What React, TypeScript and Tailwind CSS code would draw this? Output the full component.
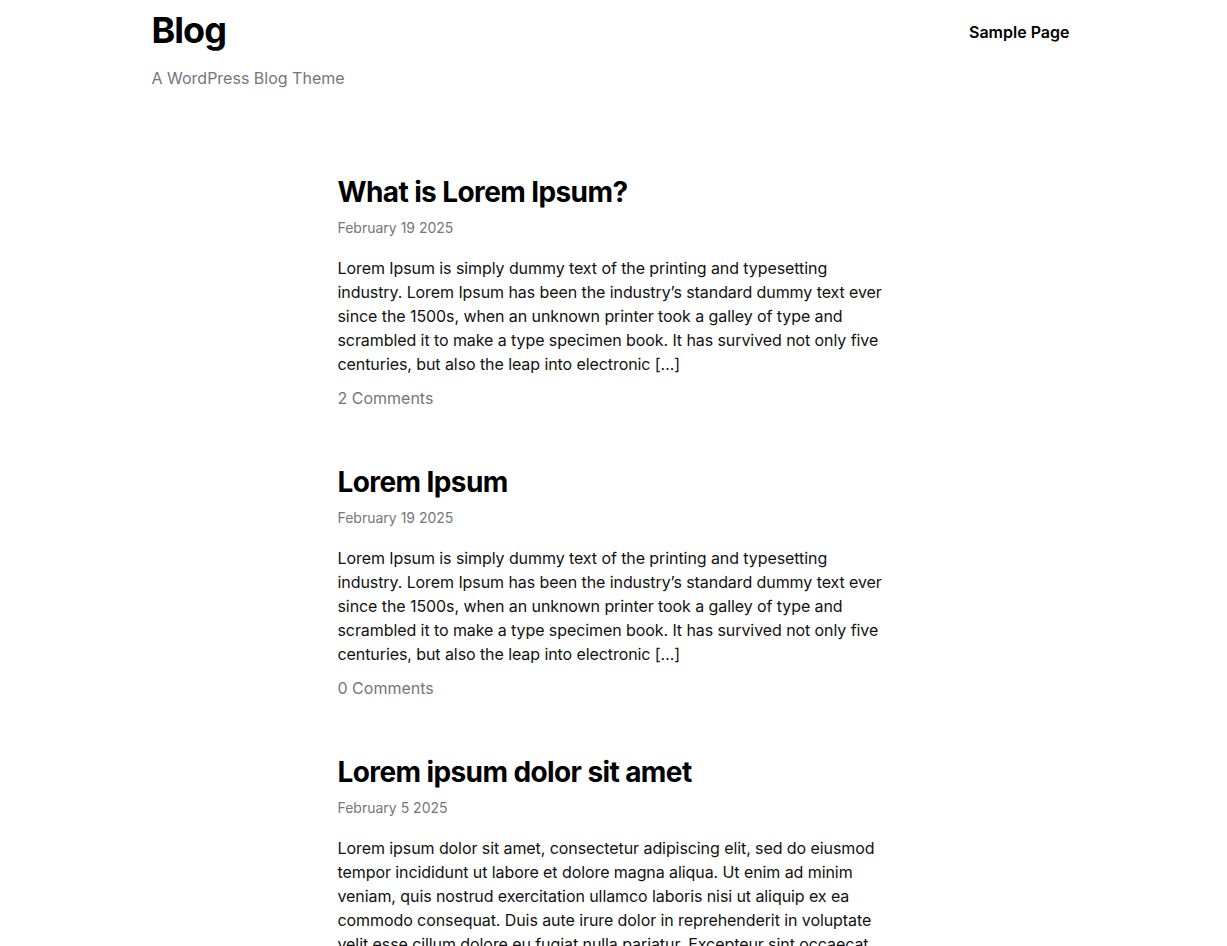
const posts = [
  {
    title: 'What is Lorem Ipsum?',
    date: 'February 19 2025',
    excerpt:
      'Lorem Ipsum is simply dummy text of the printing and typesetting industry. Lorem Ipsum has been the industry’s standard dummy text ever since the 1500s, when an unknown printer took a galley of type and scrambled it to make a type specimen book. It has survived not only five centuries, but also the leap into electronic […]',
    comments: '2 Comments',
  },
  {
    title: 'Lorem Ipsum',
    date: 'February 19 2025',
    excerpt:
      'Lorem Ipsum is simply dummy text of the printing and typesetting industry. Lorem Ipsum has been the industry’s standard dummy text ever since the 1500s, when an unknown printer took a galley of type and scrambled it to make a type specimen book. It has survived not only five centuries, but also the leap into electronic […]',
    comments: '0 Comments',
  },
  {
    title: 'Lorem ipsum dolor sit amet',
    date: 'February 5 2025',
    excerpt:
      'Lorem ipsum dolor sit amet, consectetur adipiscing elit, sed do eiusmod tempor incididunt ut labore et dolore magna aliqua. Ut enim ad minim veniam, quis nostrud exercitation ullamco laboris nisi ut aliquip ex ea commodo consequat. Duis aute irure dolor in reprehenderit in voluptate velit esse cillum dolore eu fugiat nulla pariatur. Excepteur sint occaecat cupidatat non proident, sunt in culpa qui officia deserunt mollit anim id est laborum.',
    comments: '1 Comment',
  },
]

export default function App() {
  return (
    <div className="min-h-screen bg-white text-black font-['Inter',sans-serif]">
      <header className="mx-auto flex w-[924px] items-start justify-between pr-[6px] pt-[8px]">
        <div>
          <h1 className="text-[36px] font-bold leading-[44px] tracking-[-1px]">Blog</h1>
          <p className="mt-[14px] text-[16px] leading-[24px] text-[#767676]">A WordPress Blog Theme</p>
        </div>
        <nav className="pt-[12px]">
          <a href="#" className="text-[16px] font-semibold leading-[24px]">
            Sample Page
          </a>
        </nav>
      </header>

      <main className="mx-auto mt-[84px] w-[552px] pr-[2px]">
        {posts.map((post) => (
          <article key={post.title} className="mb-[54px]">
            <h2 className="text-[28px] font-bold leading-[36px] tracking-[-0.6px]">{post.title}</h2>
            <div className="mt-[8px] text-[14px] leading-[20px] text-[#767676]">{post.date}</div>
            <p className="mt-[18px] text-[16px] leading-[24px] tracking-[-0.08px] text-[#111]">{post.excerpt}</p>
            <div className="mt-[10px] text-[16px] leading-[24px] text-[#767676]">{post.comments}</div>
          </article>
        ))}
      </main>
    </div>
  )
}
